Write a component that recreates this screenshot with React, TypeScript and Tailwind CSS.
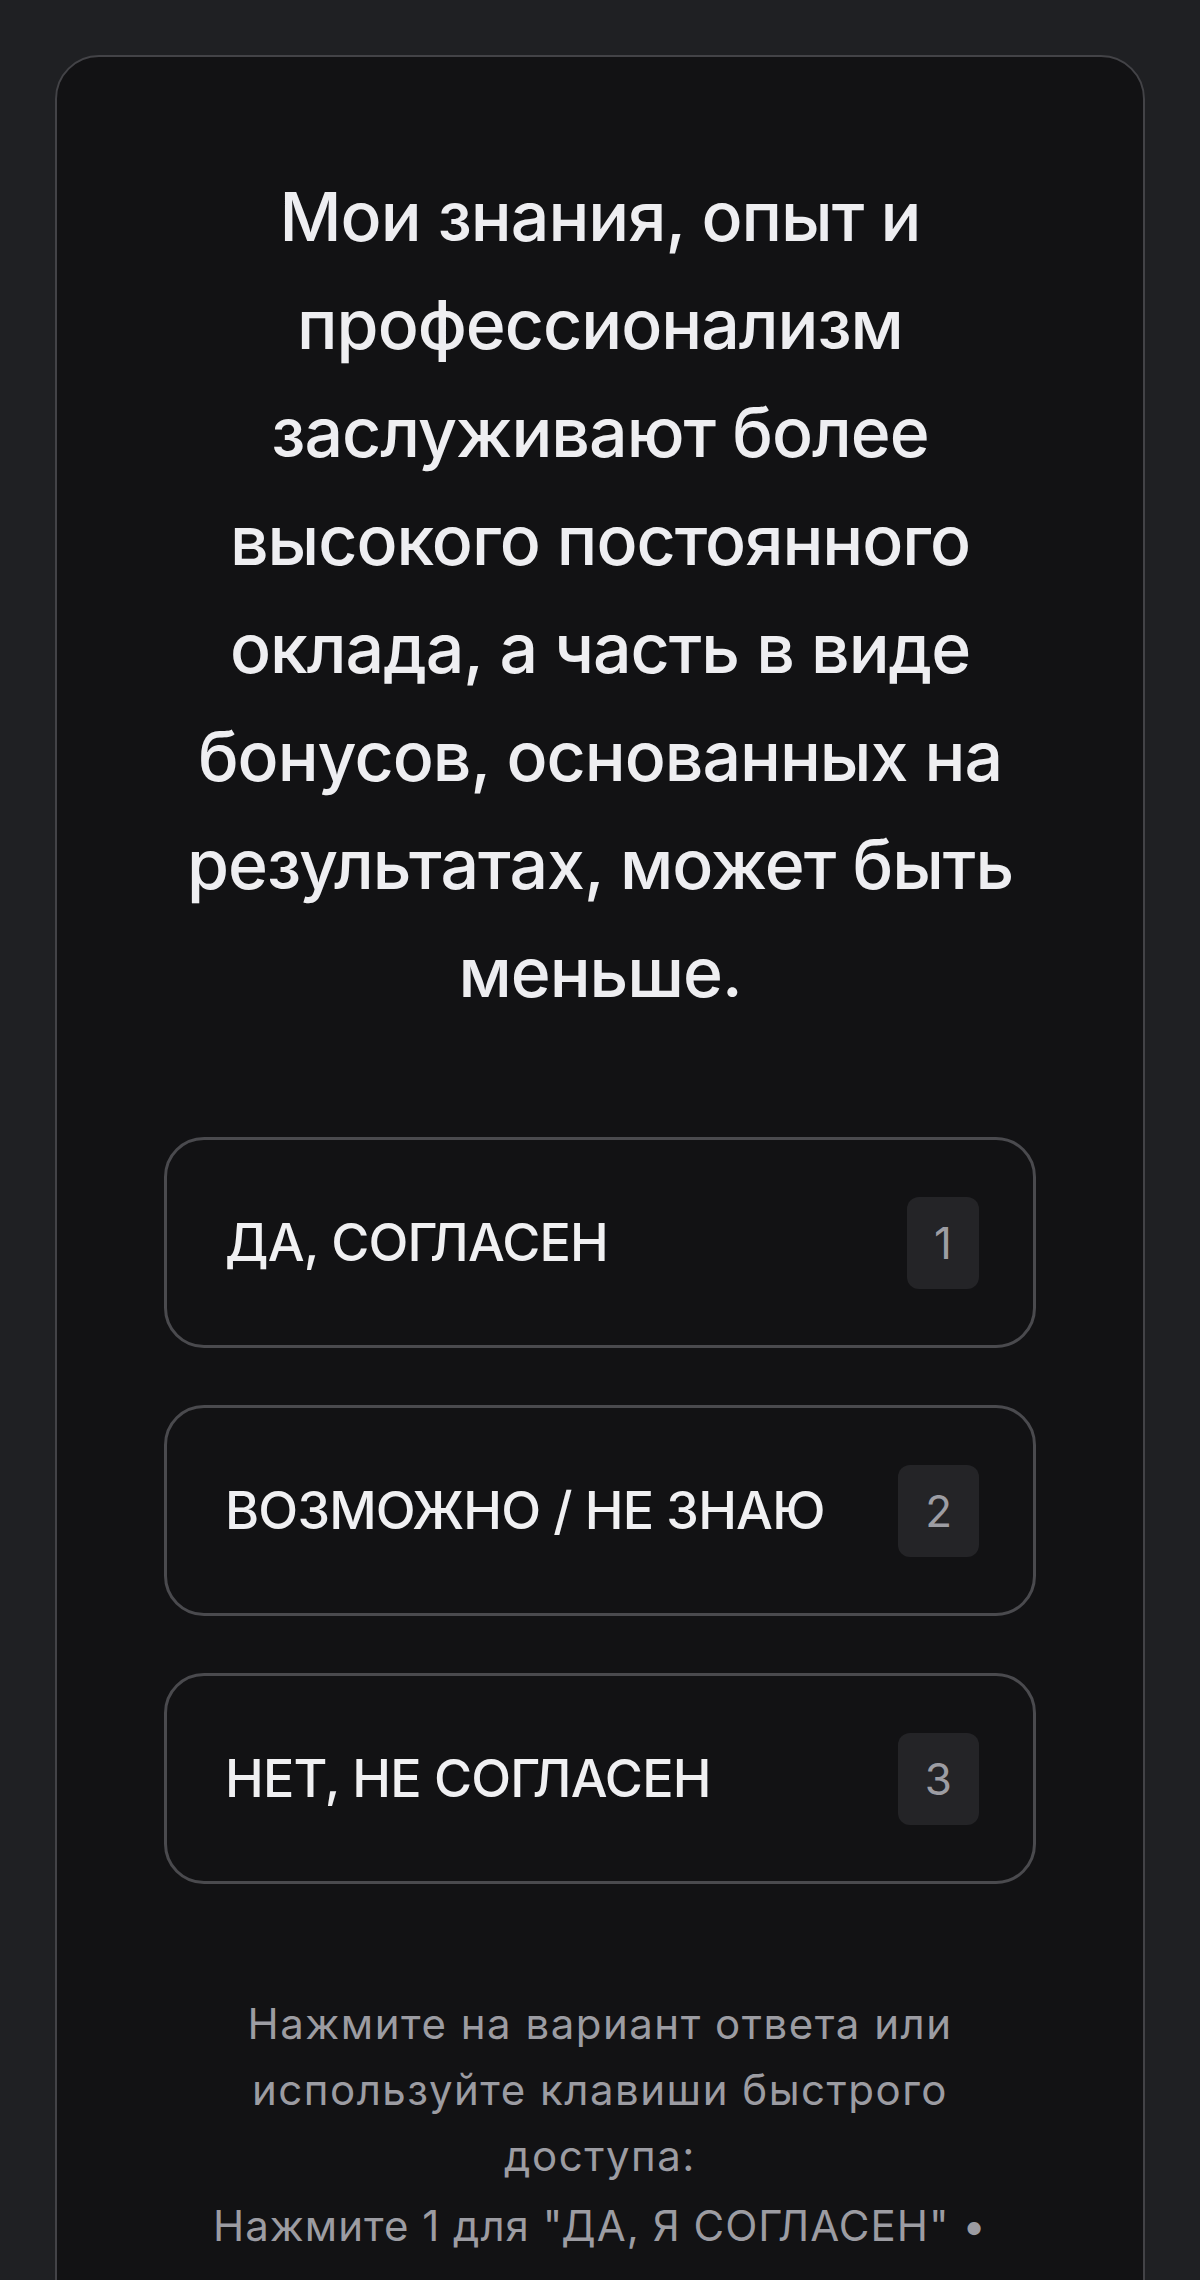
const options = [
  { label: "ДА, СОГЛАСЕН", key: "1" },
  { label: "ВОЗМОЖНО / НЕ ЗНАЮ", key: "2" },
  { label: "НЕТ, НЕ СОГЛАСЕН", key: "3" },
];

export default function App() {
  return (
    <div className="min-h-screen bg-[#1f2023] px-[55px] pt-[55px] font-['Inter','Liberation_Sans',sans-serif]">
      <div className="rounded-[44px] border-2 border-[#434347] bg-[#121214] px-[107px] pt-[105px] pb-[120px]">
        <h1 className="text-center text-[68px] leading-[108px] font-medium tracking-[-1px] text-[#eeeef1]">
          Мои знания, опыт и профессионализм заслуживают более высокого
          постоянного оклада, а часть в виде бонусов, основанных на результатах,
          может быть меньше.
        </h1>

        <div className="mt-[111px] flex flex-col gap-[57px]">
          {options.map((option) => (
            <OptionButton key={option.key} label={option.label} hotkey={option.key} />
          ))}
        </div>

        <div className="mx-auto mt-[107px] max-w-[820px] text-center text-[42px] leading-[66px] tracking-[1.5px] text-[#9c9ca2]">
          <p>Нажмите на вариант ответа или используйте клавиши быстрого доступа:</p>
          <p className="mt-[4px] tracking-[1px]">Нажмите 1 для "ДА, Я СОГЛАСЕН" •</p>
        </div>
      </div>
    </div>
  );
}

function OptionButton({ label, hotkey }: { label: string; hotkey: string }) {
  return (
    <button
      type="button"
      className="flex h-[211px] w-full items-center justify-between rounded-[40px] border-[3px] border-[#4a4a4e] bg-[#121214] pl-[58px] pr-[54px] text-left"
    >
      <span className="text-[52px] leading-none font-medium tracking-[-0.8px] text-[#f0f0f2]">
        {label}
      </span>
      <span className="flex h-[92px] items-center justify-center rounded-[12px] bg-[#242427] px-[27px] text-[44px] leading-none text-[#9d9da3]">
        {hotkey}
      </span>
    </button>
  );
}
